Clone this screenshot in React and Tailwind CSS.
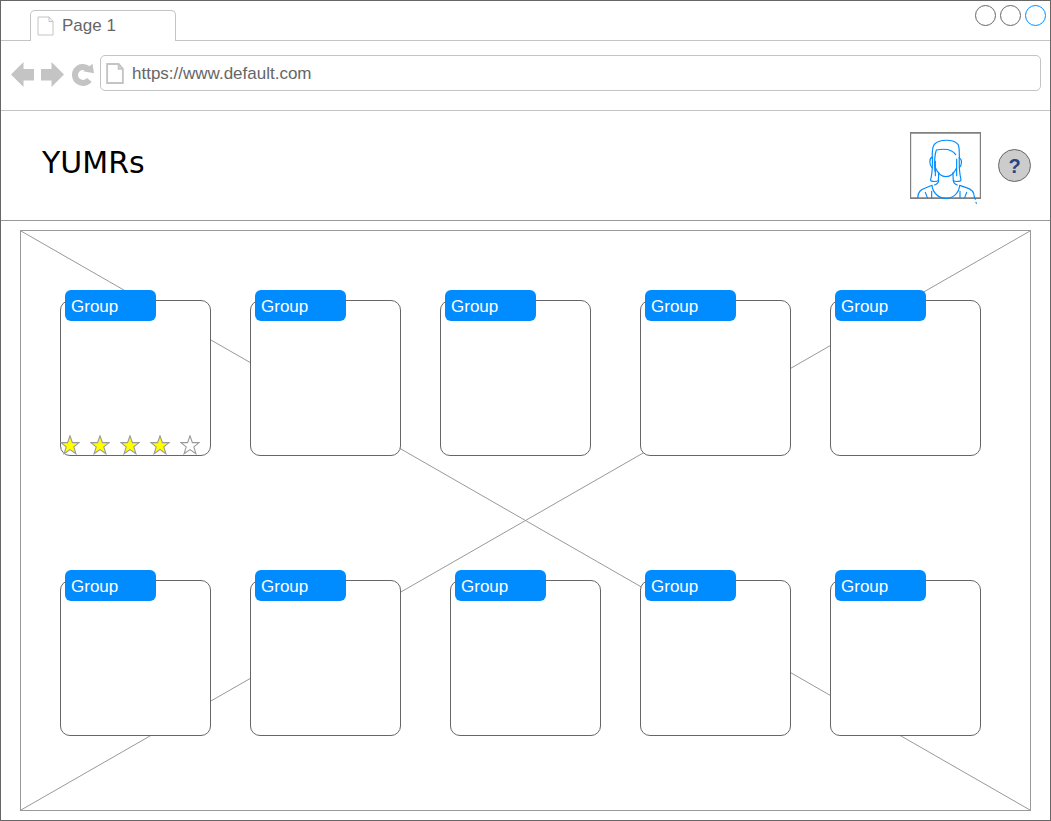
import React from "react";

const topRow = [
  { id: "a1", gap: "", rating: 4 },
  { id: "a2", gap: "ml-[39px]" },
  { id: "a3", gap: "ml-[39px]" },
  { id: "a4", gap: "ml-[49px]" },
  { id: "a5", gap: "ml-[39px]" },
];

const bottomRow = [
  { id: "b1", gap: "" },
  { id: "b2", gap: "ml-[39px]" },
  { id: "b3", gap: "ml-[49px]" },
  { id: "b4", gap: "ml-[39px]" },
  { id: "b5", gap: "ml-[39px]" },
];

function PageIcon({ className, strokeWidth }) {
  return (
    <svg viewBox="0 0 17 20" className={className} fill="none" stroke="#c4c4c4" strokeWidth={strokeWidth} aria-hidden="true">
      <path d="M1 1H12L16 5.5V19H1Z" />
      <path d="M12 1V5.5H16" />
    </svg>
  );
}

function Star({ filled }) {
  return (
    <svg viewBox="0 0 20 20" className="h-5 w-5" aria-hidden="true">
      <path
        d="M0.9 7.6H7.6L10 0.8L12.4 7.6H19.1L13.8 11.9L15.9 18.7L10 14.6L4.1 18.7L6.2 11.9Z"
        fill={filled ? "#ffff00" : "#ffffff"}
        stroke="#999999"
        strokeWidth="1.1"
      />
    </svg>
  );
}

function Rating({ value }) {
  return (
    <div role="img" aria-label={`${value} of 5 stars`} className="-ml-px flex gap-2.5">
      {[1, 2, 3, 4, 5].map((n) => (
        <Star key={n} filled={n <= value} />
      ))}
    </div>
  );
}

function GroupCard({ gap, rating }) {
  return (
    <section className={`relative flex h-[156px] flex-1 flex-col justify-end rounded-[10px] border border-[#666666] bg-white ${gap}`}>
      <h2 className="absolute -top-[11px] left-1 w-[91px] rounded-[6px] bg-[#008cff] px-1.5 pt-[3px] text-[17px] leading-7 text-white">
        Group
      </h2>
      {rating ? <Rating value={rating} /> : null}
    </section>
  );
}

function Avatar() {
  return (
    <svg viewBox="15 12 213 201" className="h-[67px] w-[71px] overflow-visible" fill="none" role="img" aria-label="Profile">
      <path d="M17 12V213M226 12V213" stroke="#666666" strokeWidth="3" />
      <path d="M15 14.5H228M15 210.5H228" stroke="#808080" strokeWidth="5" />
      <g stroke="#008cff" strokeWidth="3.5" strokeLinecap="round" strokeLinejoin="round">
        <path d="M82 90C81 68 81 55 89 48C104 33 146 33 159 49C164 56 163 75 163 90" />
        <path d="M90 130C88 105 89 80 94 66C110 63 128 63 138 68C145 71 149 75 152 80" />
        <path d="M81 87C72 92 73 111 81 119M163 90C172 93 171 112 163 119" />
        <path d="M82 88C83 115 81 137 78 151C75 157 77 160 84 160C91 161 98 159 100 157C101 150 101 142 101 134" />
        <path d="M163 88C162 115 164 137 167 151C169 157 168 160 160 160C153 161 147 159 145 157C144 150 144 142 144 134" />
        <path d="M91 119C99 137 112 146 123 146C135 146 147 137 155 119M91 100V143M155 93V143" />
        <path d="M101 157C101 165 96 169 88 171M145 157C145 165 150 169 157 171" />
        <path d="M38 210C39 191 47 185 61 180L81 172C83 195 102 211 122 211C144 211 162 196 164 172L184 179C201 184 208 192 208 207L211 214M213 223L214 226" />
        <path d="M61 193L67 209M80 190V209M165 190V209M185 193L179 209" />
      </g>
    </svg>
  );
}

function TabStrip() {
  return (
    <div className="flex h-10 items-stretch">
      <div className="w-[29px] border-b border-[#c4c4c4]" />
      <button type="button" className="mt-[9px] flex w-[146px] items-center rounded-t-[5px] border border-b-0 border-[#c4c4c4] pl-1.5 text-left">
        <PageIcon className="h-5 w-[17px]" strokeWidth="1" />
        <span className="ml-2 text-[17px] leading-5 text-[#666666]">Page 1</span>
      </button>
      <div className="flex flex-1 justify-end gap-1 border-b border-[#c4c4c4] pt-1 pr-1">
        <button type="button" aria-label="Minimize" className="h-[21px] w-[21px] rounded-full border border-[#666666]" />
        <button type="button" aria-label="Maximize" className="h-[21px] w-[21px] rounded-full border border-[#666666]" />
        <button type="button" aria-label="Close" className="h-[21px] w-[21px] rounded-full border border-[#008cff]" />
      </div>
    </div>
  );
}

function Toolbar() {
  return (
    <div className="flex h-[70px] items-start border-b border-[#c4c4c4] pt-3.5 pr-[9px] pl-2.5">
      <div className="flex h-[38px] items-center">
        <button type="button" aria-label="Back">
          <svg viewBox="0 0 23 25" className="h-[25px] w-[23px]" fill="#c4c4c4" aria-hidden="true">
            <path d="M0 12.5L12.5 0V7H23V18.5H12.5V25Z" />
          </svg>
        </button>
        <button type="button" aria-label="Forward" className="ml-[7px]">
          <svg viewBox="0 0 23 25" className="h-[25px] w-[23px]" fill="#c4c4c4" aria-hidden="true">
            <path d="M23 12.5L10.5 0V7H0V18.5H10.5V25Z" />
          </svg>
        </button>
        <button type="button" aria-label="Reload" className="ml-2">
          <svg viewBox="0 0 22 23" className="h-[23px] w-[22px] overflow-visible" aria-hidden="true">
            <path d="M16.3 6A8 8 0 1 0 17.3 16.9" fill="none" stroke="#c4c4c4" strokeWidth="6" />
            <path d="M20.5 0.8L22 10.2L11.2 8.2Z" fill="#c4c4c4" />
          </svg>
        </button>
      </div>
      <label className="ml-1.5 flex h-9 flex-1 items-center rounded-[5px] border border-[#c4c4c4] pl-[5px]">
        <PageIcon className="h-[21px] w-[18px]" strokeWidth="1.8" />
        <input
          type="text"
          aria-label="Address"
          defaultValue="https://www.default.com"
          className="ml-2 min-w-0 flex-1 bg-transparent pt-0.5 text-[17px] leading-5 text-[#666666] outline-none"
        />
      </label>
    </div>
  );
}

export default function App() {
  return (
    <div className="border border-[#666666] bg-white font-['Liberation_Sans',Arial,sans-serif]">
      <TabStrip />
      <Toolbar />
      <header className="flex h-[110px] items-center border-b border-[#999999] pr-[19px] pl-[41px]">
        <h1 className="flex-1 pb-1.5 font-['DejaVu_Sans',Verdana,sans-serif] text-[30px] leading-10 text-black">YUMRs</h1>
        <Avatar />
        <button
          type="button"
          aria-label="Help"
          className="ml-[17px] h-[33px] w-[33px] rounded-full border border-[#666666] bg-[#cccccc] text-xl leading-8 font-bold text-[#2a4480]"
        >
          ?
        </button>
      </header>
      <main className="px-[19px] py-[9px]">
        <div className="relative border border-[#999999] pt-[69px] pr-[49px] pb-[74px] pl-[39px]">
          <svg className="absolute inset-0 h-full w-full" stroke="#999999" aria-hidden="true">
            <line x1="0" y1="0" x2="100%" y2="100%" />
            <line x1="100%" y1="0" x2="0" y2="100%" />
          </svg>
          <div className="flex flex-col gap-[124px]">
            <div className="flex">
              {topRow.map((card) => (
                <GroupCard key={card.id} gap={card.gap} rating={card.rating} />
              ))}
            </div>
            <div className="flex">
              {bottomRow.map((card) => (
                <GroupCard key={card.id} gap={card.gap} />
              ))}
            </div>
          </div>
        </div>
      </main>
    </div>
  );
}
